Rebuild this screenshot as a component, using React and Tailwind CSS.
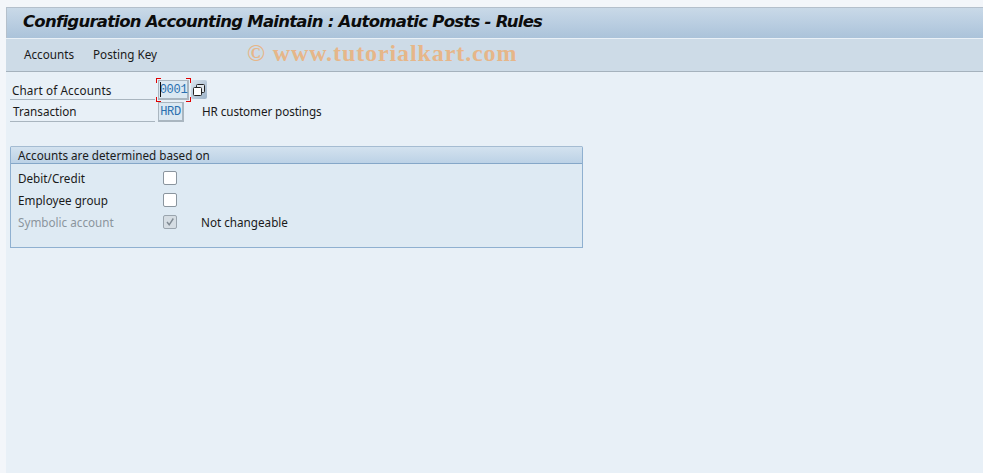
const uiFont = "font-['Noto_Sans',sans-serif]"

function CheckBox({ checked, disabled }) {
    return (
        <div className={`flex h-[14px] w-[14px] items-center justify-center rounded-[2px] border ${disabled ? 'border-[#9aa5ae] bg-[#d5dde3]' : 'border-[#8a959e] bg-white'}`}>
            {checked && (
                <svg width="10" height="10" viewBox="0 0 10 10" fill="none">
                    <path d="M2 5 L4.2 7.8 L8.3 1.5" stroke="#7f8a93" strokeWidth="1.4" />
                </svg>
            )}
        </div>
    )
}

function CheckRow({ label, disabled, checked, note }) {
    return (
        <div className="flex h-[22px] items-center">
            <span className={`w-[152px] pt-[2px] pl-[7px] ${disabled ? 'text-[#8b959d]' : 'text-[#1a1a1a]'}`}>{label}</span>
            <CheckBox checked={checked} disabled={disabled} />
            {note && <span className="ml-[24px] pt-[2px] text-[#1a1a1a]">{note}</span>}
        </div>
    )
}

export default function App() {
    return (
        <div className={`${uiFont} flex h-screen w-full flex-col overflow-hidden bg-[#f3f6fa] pt-[7px] pl-[6px] text-[11.7px] text-[#1a1a1a]`}>
            {/* Title bar */}
            <div className="flex h-[31px] items-center border-t border-l border-[#b4c0cc] bg-gradient-to-b from-[#c9d9e8] to-[#abc3da] pb-[2px] pl-[16px] font-['DejaVu_Sans',sans-serif]">
                <h1 className="text-[16.5px] leading-none font-bold tracking-[-0.74px] text-[#0c0c0c] italic">Configuration Accounting Maintain : Automatic Posts - Rules</h1>
            </div>

            {/* Menu bar */}
            <div className="flex h-[34px] items-center border-t border-b border-t-[#eaf1f7] border-b-[#a5b2bd] bg-[#cddbe7] pl-[18px]">
                <span>Accounts</span>
                <span className="ml-[19px]">Posting Key</span>
                <span className="mb-[5px] ml-[90px] font-['Liberation_Serif',serif] text-[24px] leading-none font-bold tracking-[0.9px] text-[#e6b689]">© www.tutorialkart.com</span>
            </div>

            {/* Form */}
            <div className="flex flex-1 flex-col bg-[#e8f0f7] pt-[6px] pl-[4px]">
                <div className="flex h-[22px] items-end">
                    <div className="flex h-full w-[145px] items-center border-b border-[#a9b5bf] pt-[5px] pl-[2px] tracking-[0.12px]">Chart of Accounts</div>
                    <div className="relative ml-[3px] flex h-[20px] w-[31px] items-center justify-center border-t border-r-2 border-b-2 border-l border-[#aab6c0] bg-[#dbe8f2] pl-[1px] font-['Liberation_Mono',monospace] text-[12px] tracking-[-0.3px] text-[#2a70b0]">
                        0001
                        <span className="absolute top-[1px] left-[1px] h-[15px] w-px bg-[#111]"></span>
                        <span className="absolute -top-[3px] -left-[3px] h-[5px] w-[5px] border-t border-l border-[#e00000]"></span>
                        <span className="absolute -top-[3px] -right-[4px] h-[5px] w-[5px] border-t border-r border-[#e00000]"></span>
                        <span className="absolute -bottom-[4px] -left-[3px] h-[5px] w-[5px] border-b border-l border-[#e00000]"></span>
                        <span className="absolute -right-[4px] -bottom-[4px] h-[5px] w-[5px] border-r border-b border-[#e00000]"></span>
                    </div>
                    <div className="mb-[1px] ml-[2px] flex h-[19px] w-[16px] items-center justify-center rounded-[2px] bg-gradient-to-br from-[#dbe5ee] to-[#9db3c9]">
                        <svg width="12" height="12" viewBox="0 0 12 12" fill="none">
                            <rect x="3.5" y="0.5" width="8" height="8" rx="1" fill="#dfe6ec" stroke="#222" />
                            <rect x="0.5" y="3.5" width="8" height="8" rx="1" fill="#fff" stroke="#222" />
                        </svg>
                    </div>
                </div>

                <div className="flex h-[22px] items-end">
                    <div className="flex h-full w-[145px] items-center border-b border-[#a9b5bf] pt-[3px] pl-[3px]">Transaction</div>
                    <div className="ml-[3px] flex h-[20px] w-[26px] items-center justify-center border-t border-r-2 border-b-2 border-l border-[#aab6c0] bg-[#dbe8f2] pt-[1px] font-['Liberation_Mono',monospace] text-[12px] tracking-[-0.3px] text-[#2a70b0]">HRD</div>
                    <span className="mb-[1px] ml-[18px] self-center pt-[3px] tracking-[-0.08px]">HR customer postings</span>
                </div>

                {/* Group box */}
                <div className="mt-[24px] w-[573px] rounded-t-[2px] border border-t-0 border-[#8fb0d0] bg-[#deeaf3]">
                    <div className="flex h-[18px] items-center border-t border-b border-t-[#a5bcd2] border-b-[#85a7c8] bg-gradient-to-b from-[#d3e2ef] to-[#bcd2e6] pt-[2px] pl-[7px]">Accounts are determined based on</div>
                    <div className="flex h-[83px] flex-col pt-[3px]">
                        <CheckRow label="Debit/Credit" />
                        <CheckRow label="Employee group" />
                        <CheckRow label="Symbolic account" disabled checked note="Not changeable" />
                    </div>
                </div>
            </div>
        </div>
    )
}
